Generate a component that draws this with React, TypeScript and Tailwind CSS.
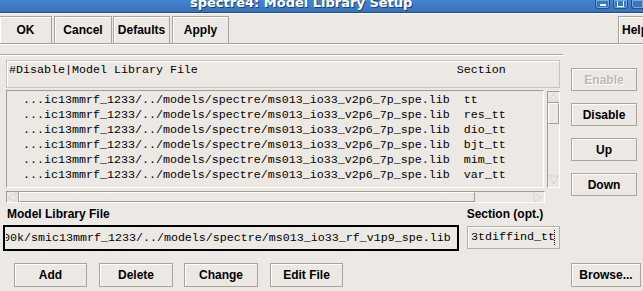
import React from "react";

const Btn = ({
  children,
  className = "",
  disabled = false,
}: {
  children: React.ReactNode;
  className?: string;
  disabled?: boolean;
}) => (
  <div
    className={`flex shrink-0 items-center justify-center border border-[#a9a59d] bg-[#ece9e4] shadow-[inset_1px_1px_0_#ffffff] text-[12px] font-bold leading-none whitespace-nowrap ${
      disabled ? "text-[#bdb9b1] [text-shadow:1px_1px_0_#ffffff]" : "text-black"
    } ${className}`}
  >
    {children}
  </div>
);

const Tri = ({ dir }: { dir: "up" | "down" | "left" | "right" }) => {
  const pts =
    dir === "up"
      ? "1,9 6,1 10,9"
      : dir === "down"
      ? "1,1 10,1 6,9"
      : dir === "left"
      ? "9,1 9,10 1,6"
      : "1,1 1,10 9,6";
  return (
    <svg width="11" height="11" viewBox="0 0 11 11">
      <polygon points={pts} fill="none" stroke="#c4c0b8" strokeWidth="1" strokeDasharray="1 1" />
    </svg>
  );
};

const rows = ["tt", "res_tt", "dio_tt", "bjt_tt", "mim_tt", "var_tt"];

const mono = "font-['Liberation_Mono','DejaVu_Sans_Mono',monospace] text-[11.67px]";

export default function App() {
  return (
    <div className="w-[643px] h-[291px] overflow-hidden bg-[#ece9e4] flex flex-col font-['Liberation_Sans',Arial,sans-serif] text-black">
      {/* Title bar */}
      <div className="h-[13px] shrink-0 bg-gradient-to-b from-[#4585cf] to-[#3872bb] border-b border-[#1f4a85] flex overflow-hidden">
        <span className="pl-[190px] -mt-[4px] text-[13px] leading-[13px] font-bold text-white font-['DejaVu_Sans',sans-serif] whitespace-nowrap [text-shadow:1px_1px_0_#1f3f6e]">
          spectre4: Model Library Setup
        </span>
        <div className="ml-auto flex gap-[3px]">
          <div className="w-[15px] h-[10px] -mt-[1px] rounded-b-[3px] border border-[#234e8a] bg-[#3a77c2] shadow-[inset_0_0_0_1px_#7aa6dc] flex items-end justify-center pb-[2px]">
            <div className="w-[6px] h-[2px] bg-white" />
          </div>
          <div className="w-[15px] h-[10px] -mt-[1px] rounded-b-[3px] border border-[#234e8a] bg-[#3a77c2] shadow-[inset_0_0_0_1px_#7aa6dc] flex items-end justify-center pb-[1px]">
            <div className="w-[7px] h-[6px] border border-white border-t-0" />
          </div>
          <div className="w-[12px] h-[10px] -mt-[1px] rounded-bl-[3px] border border-r-0 border-[#234e8a] bg-[#3a77c2] shadow-[inset_0_0_0_1px_#7aa6dc]" />
        </div>
      </div>

      {/* Toolbar */}
      <div className="h-[30px] shrink-0 flex items-start pt-[2px] border-t border-white">
        <Btn className="-ml-[1px] w-[53px] h-[28px]">OK</Btn>
        <Btn className="ml-[2px] w-[58px] h-[28px]">Cancel</Btn>
        <Btn className="ml-[1px] w-[57px] h-[28px]">Defaults</Btn>
        <Btn className="ml-[2px] w-[57px] h-[28px]">Apply</Btn>
        <Btn className="ml-[389px] w-[40px] h-[28px] justify-start pl-[3px]">Help</Btn>
      </div>
      <div className="h-[1px] shrink-0 bg-[#a6a29a]" />
      <div className="h-[1px] shrink-0 bg-white" />

      {/* frame top line */}
      <div className="h-[9px] shrink-0" />
      <div className="h-[1px] w-[563px] shrink-0 bg-[#aeaaa2]" />
      <div className="h-[1px] w-[563px] shrink-0 bg-white" />

      {/* Main row */}
      <div className="flex shrink-0">
        <div className="ml-[6px] w-[554px] flex flex-col">
          {/* header */}
          <div className={`mt-[4px] h-[28px] border border-[#c9c5bd] shadow-[inset_1px_1px_0_#ffffff] pl-[2px] pt-[2px] ${mono} leading-[15px] whitespace-pre`}>
            {"#Disable|Model Library File".padEnd(64, " ") + "Section"}
          </div>
          {/* list + vscroll */}
          <div className="mt-[2px] flex h-[98px]">
            <div className={`w-[538px] h-[98px] border border-[#a09c94] border-r-white border-b-white pl-[2px] pt-[2px] overflow-hidden ${mono} leading-[15px] whitespace-pre`}>
              {rows.map((r) => (
                <div key={r} className="h-[15px]">
                  {"  ...ic13mmrf_1233/../models/spectre/ms013_io33_v2p6_7p_spe.lib  " + r}
                </div>
              ))}
            </div>
            <div className="ml-[3px] mt-[1px] w-[13px] h-[97px] border border-[#a09c94] border-r-white border-b-white flex flex-col">
              <div className="h-[11px] flex items-center justify-center border-b border-[#a09c94]">
                <Tri dir="up" />
              </div>
              <div className="h-[21px] border border-white border-r-[#a09c94] border-b-[#a09c94]" />
              <div className="flex-1" />
              <div className="h-[11px] mb-[1px] flex items-center justify-center">
                <Tri dir="down" />
              </div>
            </div>
          </div>
          {/* hscroll */}
          <div className="mt-[3px] w-[539px] h-[12px] border border-[#a09c94] border-r-white border-b-white flex items-center">
            <div className="w-[12px] h-[10px] flex items-center justify-center border-r border-[#a09c94]">
              <Tri dir="left" />
            </div>
            <div className="w-[456px] h-[10px] border border-white border-r-[#a09c94] border-b-[#a09c94]" />
            <div className="flex-1" />
            <div className="w-[12px] h-[10px] flex items-center justify-center">
              <Tri dir="right" />
            </div>
          </div>
        </div>

        {/* Right buttons */}
        <div className="ml-[11px] pt-[12px] flex flex-col gap-[12px]">
          <Btn className="w-[66px] h-[23px]" disabled>
            Enable
          </Btn>
          <Btn className="w-[66px] h-[23px]">Disable</Btn>
          <Btn className="w-[66px] h-[23px]">Up</Btn>
          <Btn className="w-[66px] h-[23px]">Down</Btn>
        </div>
      </div>

      {/* Labels */}
      <div className="mt-[4px] h-[14px] shrink-0 flex items-center text-[12px] font-bold leading-[14px]">
        <span className="ml-[7px]">Model Library File</span>
        <span className="ml-[357px]">Section (opt.)</span>
      </div>

      {/* Inputs */}
      <div className="mt-[4px] flex shrink-0 items-start">
        <div className="ml-[3px] w-[456px] h-[26px] border-2 border-black overflow-hidden flex items-center">
          <span className={`shrink-0 ml-[1px] w-[4px] overflow-hidden ${mono} leading-[15px] whitespace-pre`}>
            <span className="inline-block -ml-[3px]">0</span>
          </span>
          <span className={`shrink-0 ${mono} leading-[15px] whitespace-pre`}>
            0k/smic13mmrf_1233/../models/spectre/ms013_io33_rf_v1p9_spe.lib
          </span>
        </div>
        <div className="ml-[8px] mt-[1px] w-[93px] h-[23px] border border-[#b3afa7] shadow-[inset_1px_1px_0_#ffffff] overflow-hidden flex items-center relative">
          <span className={`shrink-0 pl-[3px] ${mono} leading-[15px] whitespace-pre`}>3tdiffind_tt</span>
          <div className="absolute left-[86px] top-[3px] w-[1px] h-[15px] border-l border-dotted border-black" />
        </div>
      </div>

      {/* Bottom buttons */}
      <div className="mt-[12px] flex shrink-0">
        <Btn className="ml-[14px] w-[73px] h-[24px]">Add</Btn>
        <Btn className="ml-[12px] w-[74px] h-[24px]">Delete</Btn>
        <Btn className="ml-[11px] w-[74px] h-[24px]">Change</Btn>
        <Btn className="ml-[12px] w-[73px] h-[24px]">Edit File</Btn>
        <Btn className="ml-[228px] w-[70px] h-[24px]">Browse...</Btn>
      </div>
    </div>
  );
}
